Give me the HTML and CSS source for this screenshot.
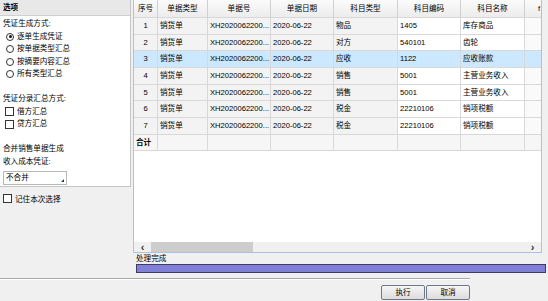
FILE: index.html
```html
<html>
    <head>
        <meta charset="utf-8" />
        <title>生成凭证</title>
        <link rel="stylesheet" href="styles.css">
    </head>
    <body>
        <div class="window">
            <div class="main">
                <div class="side">
                    <div class="panel">
                        <div class="panel-title">选项</div>
                        <div class="panel-body">
                            <div class="line">凭证生成方式:</div>
                            <div class="line opt"><span class="radio checked"></span>逐单生成凭证</div>
                            <div class="line opt"><span class="radio"></span>按单据类型汇总</div>
                            <div class="line opt"><span class="radio"></span>按摘要内容汇总</div>
                            <div class="line opt"><span class="radio"></span>所有类型汇总</div>
                            <div class="line"></div>
                            <div class="line">凭证分录汇总方式:</div>
                            <div class="line opt"><span class="check"></span>借方汇总</div>
                            <div class="line opt"><span class="check"></span>贷方汇总</div>
                            <div class="line"></div>
                            <div class="line">合并销售单据生成</div>
                            <div class="line">收入成本凭证:</div>
                            <div class="combo">不合并<span class="grip"></span></div>
                        </div>
                    </div>
                    <div class="remember"><span class="check"></span>记住本次选择</div>
                </div>
                <div class="content">
                    <div class="grid-wrap">
                        <div class="grid">
                            <div class="row head">
                                <div class="c c-no">序号</div>
                                <div class="c c-type">单据类型</div>
                                <div class="c c-bill">单据号</div>
                                <div class="c c-date">单据日期</div>
                                <div class="c c-kind">科目类型</div>
                                <div class="c c-code">科目编码</div>
                                <div class="c c-name">科目名称</div>
                                <div class="c c-more">f</div>
                            </div>
                            <div id="rows"></div>
                            <div class="row total">
                                <div class="c c-no">合计</div>
                                <div class="c c-type"></div>
                                <div class="c c-bill"></div>
                                <div class="c c-date"></div>
                                <div class="c c-kind"></div>
                                <div class="c c-code"></div>
                                <div class="c c-name"></div>
                                <div class="c c-more"></div>
                            </div>
                        </div>
                        <div class="hscroll">
                            <span class="arrow">&lsaquo;</span>
                            <div class="track"><div class="thumb"></div></div>
                            <span class="arrow">&rsaquo;</span>
                        </div>
                    </div>
                    <div class="status">处理完成</div>
                    <div class="progress"></div>
                </div>
            </div>
            <div class="footer">
                <div class="sep"></div>
                <div class="buttons">
                    <div class="btn">执行</div>
                    <div class="btn">取消</div>
                </div>
            </div>
        </div>
    <script>
        const entries = [
            ["1", "销货单", "XH2020062200...", "2020-06-22", "物品", "1405", "库存商品"],
            ["2", "销货单", "XH2020062200...", "2020-06-22", "对方", "540101", "齿轮"],
            ["3", "销货单", "XH2020062200...", "2020-06-22", "应收", "1122", "应收账款"],
            ["4", "销货单", "XH2020062200...", "2020-06-22", "销售", "5001", "主营业务收入"],
            ["5", "销货单", "XH2020062200...", "2020-06-22", "销售", "5001", "主营业务收入"],
            ["6", "销货单", "XH2020062200...", "2020-06-22", "税金", "22210106", "销项税额"],
            ["7", "销货单", "XH2020062200...", "2020-06-22", "税金", "22210106", "销项税额"]
        ];
        const cls = ["c-no", "c-type", "c-bill", "c-date", "c-kind", "c-code", "c-name", "c-more"];
        const rows = document.getElementById("rows");
        entries.forEach((entry, i) => {
            const row = document.createElement("div");
            row.className = i == 2 ? "row selected" : "row";
            cls.forEach((name, j) => {
                const cell = document.createElement("div");
                cell.className = "c " + name;
                cell.textContent = entry[j] || "";
                row.appendChild(cell);
            });
            rows.appendChild(row);
        });
    </script>
    </body>
</html>
```

FILE: styles.css
```css
body {
    margin: 0;
    background: #f0f0f0;
    color: #000;
    font-family: "Liberation Sans", "Noto Sans CJK SC", sans-serif;
    font-size: 7.6px;
}

.window {
    width: 548px;
    height: 301px;
    overflow: hidden;
}

.main {
    display: flex;
    height: 278px;
}

.side {
    width: 131px;
    flex: none;
}

.panel {
    height: 186px;
    background: #fff;
    border: 1px solid #c4c4c4;
    border-top: none;
    border-left: none;
}

.panel-title {
    height: 15px;
    line-height: 15px;
    padding-left: 3px;
    font-weight: bold;
    background: #e8e8e8;
    border-bottom: 1px solid #d0d0d0;
}

.panel-body {
    padding: 2px 0 0 3px;
}

.line {
    height: 12.5px;
    line-height: 12.5px;
    display: flex;
    align-items: center;
    white-space: nowrap;
}

.opt {
    padding-left: 2px;
}

.radio {
    width: 6px;
    height: 6px;
    border: 1px solid #333;
    border-radius: 50%;
    margin-right: 3px;
    margin-left: 1px;
    position: relative;
    background: #fff;
}

.radio.checked::after {
    content: "";
    position: absolute;
    left: 1.5px;
    top: 1.5px;
    width: 3px;
    height: 3px;
    border-radius: 50%;
    background: #111;
}

.check {
    width: 7px;
    height: 7px;
    border: 1px solid #333;
    margin-right: 3px;
    background: #fff;
    flex: none;
}

.combo {
    position: relative;
    width: 64px;
    height: 14px;
    line-height: 12px;
    margin-top: 3px;
    padding-left: 2px;
    border: 1px solid #b8b8b8;
    background: #fff;
    box-sizing: border-box;
}

.grip {
    position: absolute;
    right: 2px;
    bottom: 2px;
    width: 0;
    height: 0;
    border-left: 3px solid transparent;
    border-bottom: 3px solid #1c3a78;
}

.remember {
    display: flex;
    align-items: center;
    height: 12px;
    margin-top: 5px;
    padding-left: 3px;
}

.content {
    flex: 1;
    padding-left: 2px;
}

.grid-wrap {
    width: 407px;
    height: 252px;
    border: 1px solid #a9c4e2;
    border-top: none;
    background: #fff;
    display: flex;
    flex-direction: column;
    overflow: hidden;
}

.grid {
    flex: 1;
    overflow: hidden;
}

.row {
    display: flex;
    height: 16.67px;
    line-height: 16px;
}

.row.head {
    height: 18px;
    line-height: 18px;
}

.c {
    flex: none;
    box-sizing: border-box;
    border-right: 1px solid #d8d8d8;
    border-bottom: 1px solid #d8d8d8;
    padding-left: 2px;
    white-space: nowrap;
    overflow: hidden;
    background: #f3f3f3;
}

.head .c {
    text-align: center;
    padding-left: 0;
    background: linear-gradient(#fbfbfb, #ececec);
    border-right-color: #d0d0d0;
}

.c-no { width: 24px; text-align: center; padding-left: 0; }
.c-type { width: 50px; }
.c-bill { width: 63px; }
.c-date { width: 63px; }
.c-kind { width: 64px; }
.c-code { width: 63px; background: #fff; }
.c-name { width: 64px; background: #fff; }
.c-more { width: 60px; background: #fafafa; }

.head .c-more {
    text-align: left;
    padding-left: 13px;
}

.total .c-no {
    font-weight: bold;
    text-align: left;
    padding-left: 2px;
}

.total .c {
    background: #f6f6f6;
}

.row.selected .c {
    background: #cce8ff;
}

.hscroll {
    height: 10px;
    display: flex;
    align-items: center;
    background: #f0f0f0;
    flex: none;
}

.arrow {
    width: 17px;
    text-align: center;
    font-size: 11px;
    font-weight: bold;
    line-height: 10px;
    color: #333;
}

.track {
    flex: 1;
    height: 10px;
}

.thumb {
    width: 102px;
    height: 10px;
    background: #cdcdcd;
}

.status {
    height: 10px;
    line-height: 11px;
    padding-left: 3px;
}

.progress {
    margin: 1px 2px 0 3px;
    height: 7px;
    background: #8080d8;
    border: 1px solid #3c3c64;
}

.footer {
    height: 23px;
}

.sep {
    width: 470px;
    height: 1px;
    background: #a8a8a8;
    border-bottom: 1px solid #fff;
}

.buttons {
    width: 470px;
    display: flex;
    justify-content: flex-end;
    gap: 1px;
    padding-top: 5px;
}

.btn {
    width: 42px;
    height: 13px;
    line-height: 13px;
    text-align: center;
    border: 1px solid #707888;
    border-radius: 2px;
    background: linear-gradient(#f6f6f6, #dcdcdc);
}
```
